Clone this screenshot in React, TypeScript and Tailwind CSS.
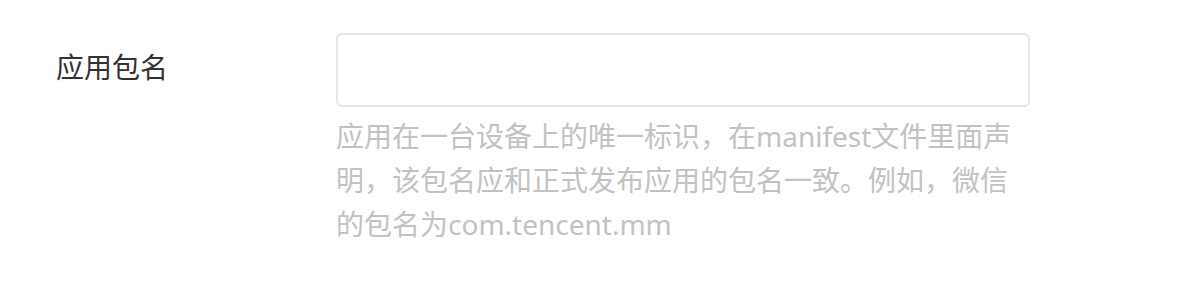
import React from 'react';

const App: React.FC = () => {
    return (
        <div
            className="w-[1186px] h-[306px] bg-white pt-[33px] pl-[56px]"
            style={{ fontFamily: '"Noto Sans", "Noto Sans CJK SC", sans-serif' }}
        >
            <div className="flex items-start">
                <label className="w-[280px] shrink-0 mt-[12px] text-[28px] leading-[44px] text-[#333333]">
                    应用包名
                </label>
                <div className="w-[694px]">
                    <input
                        type="text"
                        className="block w-full h-[74px] border-2 border-[#e6e6e6] rounded-[6px] px-4 text-[28px] focus:outline-none"
                    />
                    <p className="mt-[7px] text-[28px] leading-[44px] text-[#c2c2c2]">
                        应用在一台设备上的唯一标识，在manifest文件里面声明，该包名应和正式发布应用的包名一致。例如，微信的包名为com.tencent.mm
                    </p>
                </div>
            </div>
        </div>
    );
};

export default App;
